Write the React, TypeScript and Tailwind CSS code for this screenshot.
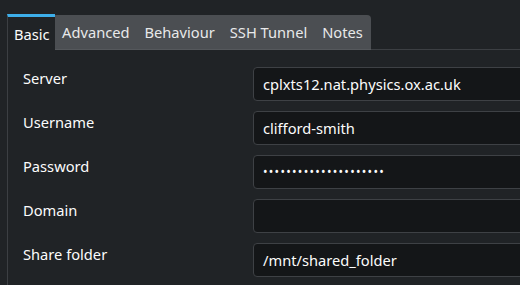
import React from "react";

const rows: { label: string; value: string; password?: boolean }[] = [
  { label: "Server", value: "cplxts12.nat.physics.ox.ac.uk" },
  { label: "Username", value: "clifford-smith" },
  { label: "Password", value: "•••••••••••••••••••••", password: true },
  { label: "Domain", value: "" },
  { label: "Share folder", value: "/mnt/shared_folder" },
];

export default function App() {
  return (
    <div
      className="w-[520px] h-[285px] overflow-hidden bg-[#202326] text-[#fcfcfc] text-[14.67px]"
      style={{ fontFamily: '"Noto Sans", "Open Sans", sans-serif' }}
    >
      <div className="pl-[7px] pt-[14px]">
        <div className="flex items-end h-[36px]">
          <div className="h-[36px] border-t-[3px] border-l border-[#3daee9] border-l-[#3c3f43] pl-[6px] pr-[5px] flex items-center bg-[#202326]">
            <span className="leading-[20px] mt-[1px]">Basic</span>
          </div>
          <div className="flex h-[35px] bg-[#4b4e52] rounded-tr-[4px] border-b border-[#55585c] text-[#e8e9ea] pr-[1px]">
            {["Advanced", "Behaviour", "SSH Tunnel", "Notes"].map((t) => (
              <div key={t} className="px-[7.5px] flex items-center leading-[20px]">
                {t}
              </div>
            ))}
          </div>
          <div className="flex-1 h-[1px] bg-[#3c3f43]" />
        </div>
        <div className="border-l border-[#3c3f43] h-[300px] pt-[17px] pl-[15px]">
          <div className="flex flex-col gap-[10px]">
            {rows.map((r) => (
              <div key={r.label} className="flex h-[34px]">
                <div className="w-[230px] shrink-0 leading-[22px] text-[#fcfcfc]">{r.label}</div>
                <div className="w-[400px] shrink-0 h-[34px] rounded-[4px] border border-[#3e4145] bg-[#141618] flex items-center px-[9px]">
                  <span
                    className={
                      r.password
                        ? "text-[12px] tracking-[1.3px] leading-[20px]"
                        : "leading-[20px]"
                    }
                  >
                    {r.value}
                  </span>
                </div>
              </div>
            ))}
          </div>
        </div>
      </div>
    </div>
  );
}
